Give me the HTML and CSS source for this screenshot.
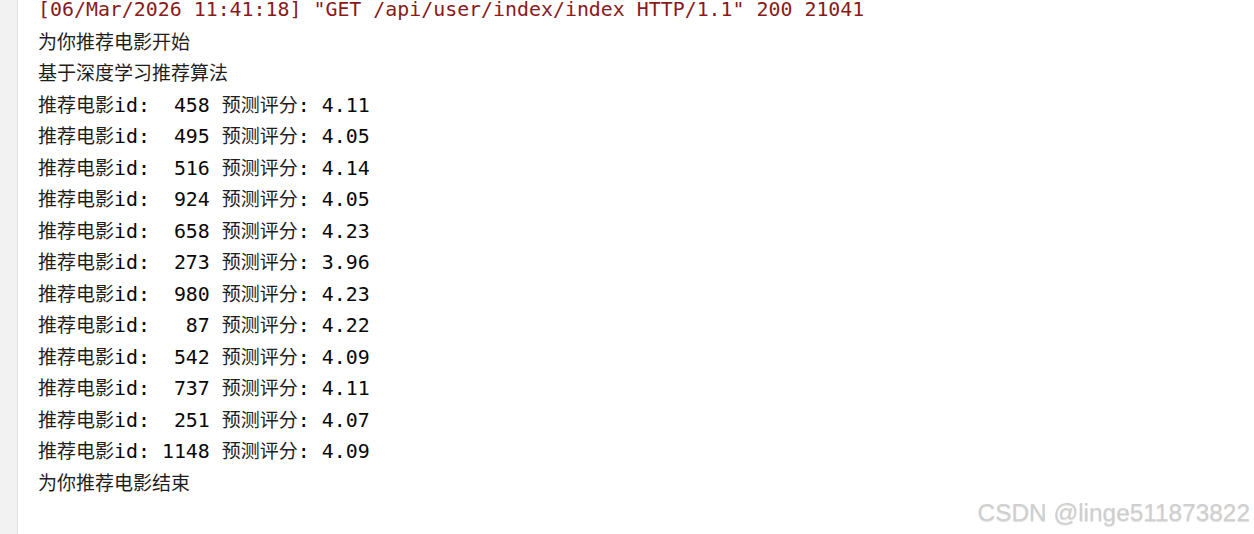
FILE: index.html
```html
<!DOCTYPE html>
<html lang="zh">
<head>
<meta charset="utf-8">
<title>console</title>
<link rel="stylesheet" href="styles.css">
</head>
<body>
<div class="console">
  <div class="gutter"></div>
  <div class="log">
    <div class="line req">[06/Mar/2026 11:41:18] "GET /api/user/index/index HTTP/1.1" 200 21041</div>
    <div class="line"><span class="cjk">为你推荐电影开始</span></div>
    <div class="line"><span class="cjk">基于深度学习推荐算法</span></div>
    <div class="line"><span class="cjk">推荐电影</span>id:  458 <span class="cjk">预测评分</span>: 4.11</div>
    <div class="line"><span class="cjk">推荐电影</span>id:  495 <span class="cjk">预测评分</span>: 4.05</div>
    <div class="line"><span class="cjk">推荐电影</span>id:  516 <span class="cjk">预测评分</span>: 4.14</div>
    <div class="line"><span class="cjk">推荐电影</span>id:  924 <span class="cjk">预测评分</span>: 4.05</div>
    <div class="line"><span class="cjk">推荐电影</span>id:  658 <span class="cjk">预测评分</span>: 4.23</div>
    <div class="line"><span class="cjk">推荐电影</span>id:  273 <span class="cjk">预测评分</span>: 3.96</div>
    <div class="line"><span class="cjk">推荐电影</span>id:  980 <span class="cjk">预测评分</span>: 4.23</div>
    <div class="line"><span class="cjk">推荐电影</span>id:   87 <span class="cjk">预测评分</span>: 4.22</div>
    <div class="line"><span class="cjk">推荐电影</span>id:  542 <span class="cjk">预测评分</span>: 4.09</div>
    <div class="line"><span class="cjk">推荐电影</span>id:  737 <span class="cjk">预测评分</span>: 4.11</div>
    <div class="line"><span class="cjk">推荐电影</span>id:  251 <span class="cjk">预测评分</span>: 4.07</div>
    <div class="line"><span class="cjk">推荐电影</span>id: 1148 <span class="cjk">预测评分</span>: 4.09</div>
    <div class="line"><span class="cjk">为你推荐电影结束</span></div>
  </div>
</div>
<div class="watermark">CSDN @linge511873822</div>
</body>
</html>
```

FILE: styles.css
```css
html, body {
  margin: 0;
  padding: 0;
  background: #ffffff;
  height: 100%;
  overflow: hidden;
}

.console {
  display: flex;
  height: 534px;
}

.gutter {
  width: 17px;
  flex: none;
  background: #f2f2f2;
  border-right: 1px solid #e2e2e2;
}

.log {
  padding-left: 20px;
  font-family: "DejaVu Sans Mono", "Noto Sans CJK SC", monospace;
  font-size: 19.9px;
  color: #080808;
}

.line {
  height: 31.53px;
  line-height: 31.53px;
  white-space: pre;
}

.line.req {
  height: 24.53px;
  line-height: 20px;
  color: #871b1b;
}

.cjk {
  font-family: "Noto Sans CJK SC", sans-serif;
  font-size: 19px;
  color: #1e1e1e;
}

.watermark {
  position: absolute;
  right: 4px;
  bottom: 7px;
  font-family: "Liberation Sans", Arial, sans-serif;
  font-size: 24.4px;
  color: #cfcfcf;
  text-shadow: 0 1px 1px rgba(0, 0, 0, 0.12);
}
```
